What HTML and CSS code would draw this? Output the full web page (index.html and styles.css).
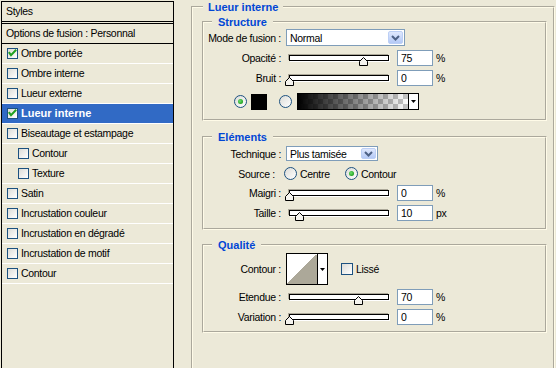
FILE: index.html
```html
<!DOCTYPE html>
<html lang="fr">
<head>
    <meta charset="UTF-8">
    <title>Style de calque - Lueur interne</title>
    <link rel="stylesheet" href="styles.css">
</head>
<body>
    <aside class="styles-panel">
        <div class="styles-title">Styles</div>
        <ul class="styles-list">
            <li class="styles-blend">Options de fusion : Personnal</li>
            <li class="style-item"><span class="check"><svg width="9" height="9" viewBox="0 0 9 9"><path d="M0.8 3.2L3 6.2L8.2 0.8" fill="none" stroke="#21a121" stroke-width="2"/></svg></span>Ombre portée</li>
            <li class="style-item"><span class="check"></span>Ombre interne</li>
            <li class="style-item"><span class="check"></span>Lueur externe</li>
            <li class="style-item is-selected"><span class="check"><svg width="9" height="9" viewBox="0 0 9 9"><path d="M0.8 3.2L3 6.2L8.2 0.8" fill="none" stroke="#21a121" stroke-width="2"/></svg></span>Lueur interne</li>
            <li class="style-item"><span class="check"></span>Biseautage et estampage</li>
            <li class="style-item style-item--sub"><span class="check"></span>Contour</li>
            <li class="style-item style-item--sub"><span class="check"></span>Texture</li>
            <li class="style-item"><span class="check"></span>Satin</li>
            <li class="style-item"><span class="check"></span>Incrustation couleur</li>
            <li class="style-item"><span class="check"></span>Incrustation en dégradé</li>
            <li class="style-item"><span class="check"></span>Incrustation de motif</li>
            <li class="style-item"><span class="check"></span>Contour</li>
        </ul>
    </aside>

    <main class="settings">
        <fieldset class="group group-main">
            <legend>Lueur interne</legend>

            <fieldset class="group group-structure">
                <legend>Structure</legend>
                <div class="row row-mode">
                    <span class="label">Mode de fusion :</span>
                    <div class="combo combo-mode">
                        <span>Normal</span>
                        <span class="combo-btn"><svg width="9" height="6" viewBox="0 0 9 6"><path d="M1 1l3.5 3.5L8 1" fill="none" stroke="#4d6185" stroke-width="2"/></svg></span>
                    </div>
                </div>
                <div class="row row-gap4">
                    <span class="label">Opacité :</span>
                    <div class="slider"><span class="slider-thumb" style="left: 75%"><svg width="9" height="9" viewBox="0 0 9 9"><path d="M0.5 8.5V4.5L4.5 0.5L8.5 4.5V8.5Z" fill="#f4f3ee" stroke="#000"/></svg></span></div>
                    <input class="num" type="text" value="75">
                    <span class="unit">%</span>
                </div>
                <div class="row row-gap4">
                    <span class="label">Bruit :</span>
                    <div class="slider"><span class="slider-thumb" style="left: 0%"><svg width="9" height="9" viewBox="0 0 9 9"><path d="M0.5 8.5V4.5L4.5 0.5L8.5 4.5V8.5Z" fill="#f4f3ee" stroke="#000"/></svg></span></div>
                    <input class="num" type="text" value="0">
                    <span class="unit">%</span>
                </div>
                <div class="row row-colors">
                    <span class="radio is-on"></span>
                    <span class="swatch"></span>
                    <span class="radio radio-gradient"></span>
                    <div class="gradient-picker">
                        <span class="gradient-preview"></span>
                        <span class="drop-arrow"><svg width="5" height="3" viewBox="0 0 5 3"><path d="M0 0h5L2.5 3z" fill="#000"/></svg></span>
                    </div>
                </div>
            </fieldset>

            <fieldset class="group group-elements">
                <legend>Eléments</legend>
                <div class="row row-technique">
                    <span class="label">Technique :</span>
                    <div class="combo combo-technique">
                        <span>Plus tamisée</span>
                        <span class="combo-btn"><svg width="9" height="6" viewBox="0 0 9 6"><path d="M1 1l3.5 3.5L8 1" fill="none" stroke="#4d6185" stroke-width="2"/></svg></span>
                    </div>
                </div>
                <div class="row row-source">
                    <span class="label label-source">Source :</span>
                    <label class="option option-centre"><span class="radio"></span>Centre</label>
                    <label class="option"><span class="radio is-on"></span>Contour</label>
                </div>
                <div class="row row-gap5">
                    <span class="label">Maigri :</span>
                    <div class="slider"><span class="slider-thumb" style="left: 0%"><svg width="9" height="9" viewBox="0 0 9 9"><path d="M0.5 8.5V4.5L4.5 0.5L8.5 4.5V8.5Z" fill="#f4f3ee" stroke="#000"/></svg></span></div>
                    <input class="num" type="text" value="0">
                    <span class="unit">%</span>
                </div>
                <div class="row row-gap4">
                    <span class="label">Taille :</span>
                    <div class="slider"><span class="slider-thumb" style="left: 10%"><svg width="9" height="9" viewBox="0 0 9 9"><path d="M0.5 8.5V4.5L4.5 0.5L8.5 4.5V8.5Z" fill="#f4f3ee" stroke="#000"/></svg></span></div>
                    <input class="num" type="text" value="10">
                    <span class="unit">px</span>
                </div>
            </fieldset>

            <fieldset class="group group-quality">
                <legend>Qualité</legend>
                <div class="row row-contour">
                    <span class="label">Contour :</span>
                    <div class="contour-picker">
                        <span class="contour-preview"></span>
                        <span class="drop-arrow"><svg width="5" height="3" viewBox="0 0 5 3"><path d="M0 0h5L2.5 3z" fill="#000"/></svg></span>
                    </div>
                    <label class="option option-lisse"><span class="check check-lg"></span>Lissé</label>
                </div>
                <div class="row row-gap4">
                    <span class="label">Etendue :</span>
                    <div class="slider"><span class="slider-thumb" style="left: 70%"><svg width="9" height="9" viewBox="0 0 9 9"><path d="M0.5 8.5V4.5L4.5 0.5L8.5 4.5V8.5Z" fill="#f4f3ee" stroke="#000"/></svg></span></div>
                    <input class="num" type="text" value="70">
                    <span class="unit">%</span>
                </div>
                <div class="row row-gap4">
                    <span class="label">Variation :</span>
                    <div class="slider"><span class="slider-thumb" style="left: 0%"><svg width="9" height="9" viewBox="0 0 9 9"><path d="M0.5 8.5V4.5L4.5 0.5L8.5 4.5V8.5Z" fill="#f4f3ee" stroke="#000"/></svg></span></div>
                    <input class="num" type="text" value="0">
                    <span class="unit">%</span>
                </div>
            </fieldset>
        </fieldset>
    </main>
</body>
</html>
```

FILE: styles.css
```css
* {
    box-sizing: border-box;
}
body {
    margin: 0;
    height: 368px;
    overflow: hidden;
    display: flex;
    align-items: flex-start;
    background-color: #ece9d8; /* XP dialog beige */
    color: #000;
    font-family: "Liberation Sans", Arial, sans-serif;
    font-size: 10.5px;
    letter-spacing: -0.3px;
}

/* ---- left list of styles ---- */
.styles-panel {
    flex-shrink: 0;
    width: 173px;
    height: 367px;
    margin: 1px 0 0 1px;
    border: 1px solid #000;
    border-bottom: 0; /* the list runs on below the window */
}
.styles-title {
    height: 20px;
    margin-bottom: 1px;
    padding-left: 4px;
    line-height: 19px;
    border-bottom: 1px solid #000;
}
.styles-list {
    list-style: none;
    margin: 0;
    padding: 0;
    border-top: 1px solid #000;
}
.styles-list li {
    display: flex;
    align-items: center;
    height: 20px;
    line-height: 19px;
    padding-left: 5px;
    border-bottom: 1px solid #fff;
    white-space: nowrap;
}
.styles-list .styles-blend {
    padding-left: 4px;
    border-bottom-color: #000;
}
.styles-list .style-item--sub {
    padding-left: 16px;
}
.styles-list .is-selected {
    background-color: #316ac5;
    color: #fff;
    font-size: 11px;
    font-weight: bold;
    letter-spacing: 0;
}
.check {
    flex-shrink: 0;
    display: flex;
    align-items: center;
    justify-content: center;
    width: 11px;
    height: 11px;
    margin-right: 3px;
    border: 1px solid #1c5180;
    background: linear-gradient(135deg, #dcdcd7, #fff);
}
.check-lg {
    width: 12px;
    height: 12px;
}

/* ---- right side groups ---- */
.settings {
    margin-left: 17px;
}
.group {
    min-width: 0;
    margin: 0;
    padding: 0;
    border: 2px groove #fffbe8;
}
.group legend {
    margin-left: 8px;
    padding: 0 6px;
    line-height: 14px;
    font-size: 11px;
    font-weight: bold;
    letter-spacing: 0;
    color: #0046d5;
}
.group-main {
    width: 364px;
    height: 368px;
    border-bottom: 0;
}
.group-main > legend {
    margin-left: 10px;
    padding: 0 5px;
}
.group-main .group {
    width: 345px;
    margin-left: 9px;
}
.group-structure {
    margin-top: 1px;
    padding-bottom: 9px;
}
.group-elements {
    margin-top: 9px;
    padding-bottom: 7px;
}
.group-main .group-quality {
    margin-top: 8px;
    padding-bottom: 6px;
}

.row {
    display: flex;
    align-items: center;
    white-space: nowrap;
}
.row-gap4 { margin-top: 4px; }
.row-gap5 { margin-top: 5px; }
.row-technique { margin-top: 2px; }
.row-source { margin-top: 6px; }
.row-contour { margin-top: 1px; }
.row-colors {
    margin-top: 7px;
    padding-left: 30px;
}
.label {
    flex-shrink: 0;
    width: 77px;
    text-align: right;
}
.label-source {
    width: 71px;
    margin-right: 9px;
}

/* combo boxes */
.combo {
    display: flex;
    align-items: center;
    justify-content: space-between;
    height: 17px;
    margin-left: 5px;
    padding: 0 1px 0 3px;
    border: 1px solid #7f9db9;
    background: #fff;
}
.combo-mode { width: 119px; }
.combo-technique {
    width: 92px;
    height: 15px;
}
.combo-btn {
    display: flex;
    align-items: center;
    justify-content: center;
    width: 15px;
    height: 13px;
    border: 1px solid #bccff5;
    border-radius: 2px;
    background: linear-gradient(#dfe8fd, #b4c9f6);
}
.combo-technique .combo-btn { height: 11px; }

/* sliders */
.slider {
    position: relative;
    flex-shrink: 0;
    width: 100px;
    height: 6px;
    margin-left: 8px;
    border: 1px solid #000;
    background: #fff;
    box-shadow: -1px -1px 0 #aca899, 1px 1px 0 #fff;
}
.slider-thumb {
    position: absolute;
    top: 1px;
    margin-left: -5px;
    width: 9px;
    height: 9px;
    line-height: 0;
}
.num {
    width: 36px;
    height: 16px;
    margin: 0 0 0 8px;
    padding: 0 0 0 3px;
    border: 1px solid #7f9db9;
    background: #fff;
    font: inherit;
    letter-spacing: inherit;
    color: #000;
    outline: none;
}
.unit {
    margin-left: 3px;
}

/* radios */
.radio {
    flex-shrink: 0;
    display: flex;
    align-items: center;
    justify-content: center;
    width: 13px;
    height: 13px;
    border: 1px solid #1c5180;
    border-radius: 50%;
    background: linear-gradient(135deg, #dcdcd7, #fff);
}
.radio.is-on::after {
    content: "";
    width: 5px;
    height: 5px;
    border-radius: 50%;
    background: radial-gradient(circle at 40% 40%, #6ee06e, #21a121 70%);
}
.option {
    display: flex;
    align-items: center;
    gap: 3px;
}
.option-centre { width: 61px; }
.option-lisse {
    margin-left: 13px;
    gap: 0;
}

/* colour / gradient choice */
.swatch {
    width: 16px;
    height: 16px;
    margin-left: 4px;
    background: #000;
}
.radio-gradient { margin-left: 12px; }
.gradient-picker {
    display: flex;
    width: 122px;
    height: 17px;
    margin-left: 5px;
    border: 1px solid #000;
    background: #fff;
}
.gradient-preview {
    flex: 1;
    border-right: 1px solid #000;
    background:
        linear-gradient(to right, #000, rgba(0, 0, 0, 0)),
        repeating-conic-gradient(#c6c6c6 0 25%, #fff 0 50%) 0 0 / 10px 10px;
}
.drop-arrow {
    display: flex;
    align-items: center;
    justify-content: center;
    width: 9px;
    line-height: 0;
}

/* contour picker */
.contour-picker {
    display: flex;
    width: 42px;
    height: 32px;
    margin-left: 5px;
    border: 1px solid #000;
    background: #fff;
}
.contour-preview {
    width: 31px;
    border-right: 1px solid #000;
    background: linear-gradient(to bottom right, #fff 50%, #aca899 50%);
}
.contour-picker .drop-arrow {
    flex: 1;
}
```
